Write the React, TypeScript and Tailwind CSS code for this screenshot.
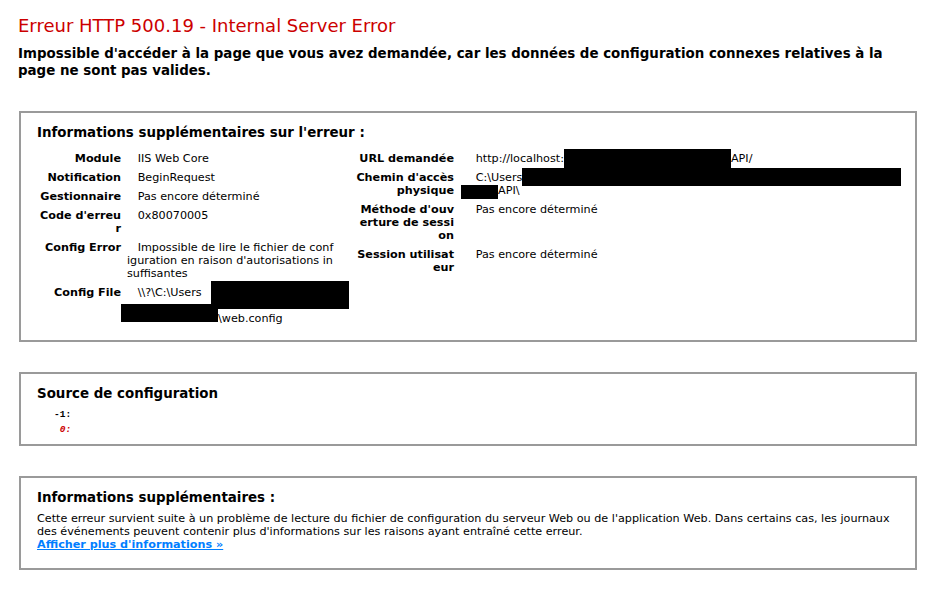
import React from 'react';

const font = "font-['Verdana','DejaVu_Sans',sans-serif]";

type Row = { label: React.ReactNode; value: React.ReactNode };

function DetailTable({
  rows,
  labelWidth,
  gap,
  valueWidth,
}: {
  rows: Row[];
  labelWidth: string;
  gap: string;
  valueWidth: string;
}) {
  return (
    <div className="flex flex-col">
      {rows.map((row, i) => (
        <div key={i} className="flex py-[3px] leading-[13px]">
          <div className={`${labelWidth} ${gap} flex shrink-0 justify-end text-right font-bold whitespace-nowrap`}>
            <div>{row.label}</div>
          </div>
          <div className={`${valueWidth} relative shrink-0 whitespace-pre`}>{row.value}</div>
        </div>
      ))}
    </div>
  );
}

// redacted bits of the screenshot
const Black = ({ className }: { className: string }) => (
  <span className={`inline-block bg-black align-top ${className}`} />
);

export default function App() {
  const leftRows: Row[] = [
    { label: 'Module', value: '   IIS Web Core' },
    { label: 'Notification', value: '   BeginRequest' },
    { label: 'Gestionnaire', value: '   Pas encore déterminé' },
    {
      label: (
        <>
          Code d'erreu
          <br />r
        </>
      ),
      value: '   0x80070005',
    },
    {
      label: 'Config Error',
      value: (
        <>
          {'   Impossible de lire le fichier de conf'}
          <br />
          {"iguration en raison d'autorisations in"}
          <br />
          suffisantes
        </>
      ),
    },
    {
      label: 'Config File',
      value: (
        <>
          {'   \\\\?\\C:\\Users'}
          <br />
          {' '}
          <br />
          <span className="pl-[91px]">\web.config</span>
          <span className="absolute left-[84px] top-[-5px] h-[28px] w-[138px] bg-black" />
          <span className="absolute left-[-6px] top-[18px] h-[18px] w-[97px] bg-black" />
        </>
      ),
    },
  ];

  const rightRows: Row[] = [
    {
      label: 'URL demandée',
      value: (
        <>
          {'   http://localhost:'}
          <Black className="-my-[3px] h-[19px] w-[167px]" />
          API/
        </>
      ),
    },
    {
      label: (
        <>
          Chemin d'accès
          <br />
          physique
        </>
      ),
      value: (
        <>
          {'   C:\\Users'}
          <Black className="-mt-[3px] -mb-[2px] h-[18px] w-[379px]" />
          <br />
          <Black className="-ml-[4px] mt-[1px] -mb-[2px] h-[14px] w-[37px]" />
          API\
        </>
      ),
    },
    {
      label: (
        <>
          Méthode d'ouv
          <br />
          erture de sessi
          <br />
          on
        </>
      ),
      value: '   Pas encore déterminé',
    },
    {
      label: (
        <>
          Session utilisat
          <br />
          eur
        </>
      ),
      value: '   Pas encore déterminé',
    },
  ];

  return (
    <div className={`min-h-screen bg-white text-[11.2px] text-black ${font}`}>
      <div className="pl-[18px] pt-[14px]">
        <h2 className="text-[18px] leading-[23px] font-normal text-[#CC0000]">
          Erreur HTTP 500.19 - Internal Server Error
        </h2>
        <h3 className="mt-[8px] text-[13.4px] leading-[17px] font-bold">
          Impossible d'accéder à la page que vous avez demandée, car les données de configuration connexes relatives à la
          <br />
          page ne sont pas valides.
        </h3>
      </div>

      <div className="ml-[19px] mt-[32px] flex w-[898px] flex-col gap-[30px]">
        {/* Detailed error information */}
        <div className="border-2 border-[#9a9a9a] pt-[12px] pb-[12px] pl-[16px]">
          <h4 className="text-[13.4px] leading-[16px] font-bold">Informations supplémentaires sur l'erreur :</h4>
          <div className="mt-[7.5px] flex">
            <DetailTable rows={leftRows} labelWidth="w-[84px]" gap="mr-[6px]" valueWidth="w-[213px]" />
            <div className="ml-[14px]">
              <DetailTable rows={rightRows} labelWidth="w-[100px]" gap="mr-[11px]" valueWidth="w-[440px]" />
            </div>
          </div>
        </div>

        {/* Config source */}
        <div className="border-2 border-[#9a9a9a] pt-[12px] pb-[7px] pl-[16px]">
          <h4 className="text-[13.4px] leading-[16px] font-bold">Source de configuration</h4>
          <pre className="mt-[5.5px] font-['Liberation_Mono','DejaVu_Sans_Mono',monospace] text-[9.5px] leading-[15px] font-bold">
            {'   -1: \n'}
            <span className="italic text-[#CC0000]">{'    0: '}</span>
          </pre>
        </div>

        {/* More information */}
        <div className="border-2 border-[#9a9a9a] pt-[12px] pb-[17px] pl-[16px]">
          <h4 className="text-[13.4px] leading-[16px] font-bold">Informations supplémentaires :</h4>
          <p className="mt-[5.5px] leading-[13px]">
            Cette erreur survient suite à un problème de lecture du fichier de configuration du serveur Web ou de l'application Web. Dans certains cas, les journaux
            <br />
            des événements peuvent contenir plus d'informations sur les raisons ayant entraîné cette erreur.
            <br />
            <a href="#" className="font-bold text-[#007EFF] underline">
              Afficher plus d'informations »
            </a>
          </p>
        </div>
      </div>
    </div>
  );
}
